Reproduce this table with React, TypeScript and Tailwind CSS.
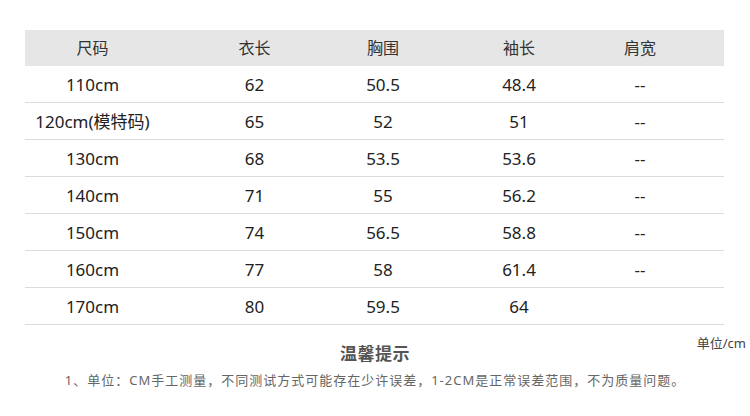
import React from 'react';

const rows = [
  ['110cm', '62', '50.5', '48.4', '--'],
  ['120cm(模特码)', '65', '52', '51', '--'],
  ['130cm', '68', '53.5', '53.6', '--'],
  ['140cm', '71', '55', '56.2', '--'],
  ['150cm', '74', '56.5', '58.8', '--'],
  ['160cm', '77', '58', '61.4', '--'],
  ['170cm', '80', '59.5', '64', ''],
];

const headers = ['尺码', '衣长', '胸围', '袖长', '肩宽'];

// column boundaries chosen so each label sits on the reference's centre line
const gridCols = 'grid grid-cols-[135px_189px_68px_204px_38px_1fr]';

export default function App() {
  return (
    <div
      className="w-[750px] h-[416px] bg-white text-[#333] overflow-hidden"
      style={{ fontFamily: '"Noto Sans", "Noto Sans CJK SC", sans-serif' }}
    >
      {/* Size table */}
      <div className="ml-[25px] mt-[30px] w-[699px]">
        <div className={`${gridCols} h-[36px] items-center bg-[#e6e6e6] text-[16px]`}>
          {headers.map((h) => (
            <div key={h} className="text-center whitespace-nowrap">
              {h}
            </div>
          ))}
          <div />
        </div>
        {rows.map((r) => (
          <div
            key={r[0]}
            className={`${gridCols} h-[37px] items-center pt-[2px] border-b border-[#dcdcdc] text-[17px] leading-[24px] text-[#222]`}
          >
            {r.map((c, i) => (
              <div key={i} className="text-center whitespace-nowrap">
                {c}
              </div>
            ))}
            <div />
          </div>
        ))}
      </div>

      {/* Tips */}
      <div className="grid grid-cols-[1fr_auto_1fr] mt-[18px]">
        <div />
        <div className="text-[17px] leading-[22px] font-bold text-[#555] tracking-[0.5px]">温馨提示</div>
        <div className="flex justify-end pr-[4px] -mt-[8px] text-[13px] leading-[16px] text-[#444]">
          单位/cm
        </div>
      </div>
      <div className="mt-[5px] text-center text-[13px] leading-[20px] text-[#666] tracking-[1px] whitespace-nowrap">
        1、单位：CM手工测量，不同测试方式可能存在少许误差，1-2CM是正常误差范围，不为质量问题。
      </div>
    </div>
  );
}
